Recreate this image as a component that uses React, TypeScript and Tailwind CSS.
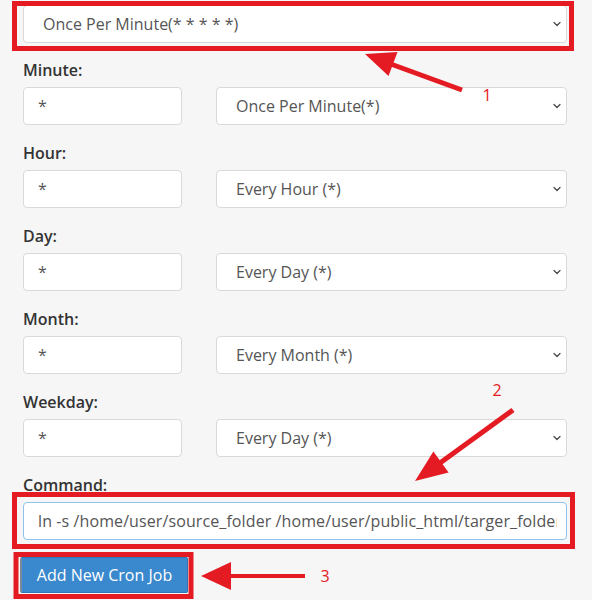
import { ChevronDown } from "lucide-react";

const RED = "#e41b22";

const rows = [
  { label: "Minute:", select: "Once Per Minute(*)" },
  { label: "Hour:", select: "Every Hour (*)" },
  { label: "Day:", select: "Every Day (*)" },
  { label: "Month:", select: "Every Month (*)" },
  { label: "Weekday:", select: "Every Day (*)" },
];

function FakeSelect({ text, className = "" }: { text: string; className?: string }) {
  return (
    <div
      className={`flex h-[38px] items-center justify-between rounded-[4px] border border-[#d9d9d9] bg-white pl-[19px] pr-[3px] text-[16px] text-[#555] ${className}`}
    >
      <span>{text}</span>
      <ChevronDown className="h-[12px] w-[12px] text-[#444]" strokeWidth={2.4} />
    </div>
  );
}

function Annotations() {
  return (
    <svg
      className="pointer-events-none absolute left-0 top-0"
      width={592}
      height={600}
      viewBox="0 0 592 600"
    >
      <g fill="none" stroke={RED} strokeWidth={5}>
        <rect x={14.5} y={3.5} width={557} height={45} />
        <rect x={14.5} y={494.5} width={558} height={52} />
        <rect x={16} y={554.5} width={175} height={42} />
      </g>
      <g stroke={RED} strokeWidth={5} fill={RED}>
        <line x1={462} y1={90} x2={388} y2={63} />
        <line x1={513} y1={410} x2={440} y2={463} />
        <line x1={305} y1={576} x2={228} y2={576} strokeWidth={4} />
      </g>
      <g fill={RED}>
        <polygon points="365,54 397.5,52 388.5,76" />
        <polygon points="415,481 448.6,472.5 433.4,451.5" />
        <polygon points="201,576 231,562 231,590" />
      </g>
      <g
        fill={RED}
        fontFamily="'Open Sans', sans-serif"
        fontSize={16}
        textAnchor="middle"
        dominantBaseline="central"
      >
        <text x={487} y={95}>1</text>
        <text x={497} y={390}>2</text>
        <text x={325} y={576}>3</text>
      </g>
    </svg>
  );
}

export default function App() {
  return (
    <div
      className="relative h-[600px] w-[592px] overflow-hidden bg-[#f6f6f6] pl-[23px] pr-[25px] pt-[5px]"
      style={{ fontFamily: "'Open Sans', sans-serif" }}
    >
      <FakeSelect text="Once Per Minute(* * * * *)" />

      <div className="mt-[17px]">
        {rows.map((row) => (
          <div key={row.label} className="mb-[18px]">
            <div className="mb-[7px] h-[20px] text-[16px] font-semibold leading-[20px] text-[#333]">
              {row.label}
            </div>
            <div className="flex gap-[34px]">
              <div className="flex h-[38px] w-[159px] shrink-0 items-center rounded-[4px] border border-[#d9d9d9] bg-white pl-[14px] text-[16px] text-[#555]">
                *
              </div>
              <FakeSelect text={row.select} className="flex-1" />
            </div>
          </div>
        ))}

        <div className="mb-[7px] h-[20px] text-[16px] font-semibold leading-[20px] text-[#333]">
          Command:
        </div>
        <input
          readOnly
          value="ln -s /home/user/source_folder /home/user/public_html/targer_folder"
          className="block h-[38px] w-full rounded-[4px] border border-[#8fc3ee] bg-white pl-[14px] pr-[9px] text-[16px] tracking-[0.1px] text-[#555] outline-none"
        />

        <button className="mt-[17px] ml-[-3px] flex h-[36px] w-[168px] items-center justify-center rounded-[2px] border border-[#2f74b5] border-l-[#7d8a96] border-l-2 bg-[#3a88ce] text-[16px] text-white">
          Add New Cron Job
        </button>
      </div>

      <Annotations />
    </div>
  );
}
